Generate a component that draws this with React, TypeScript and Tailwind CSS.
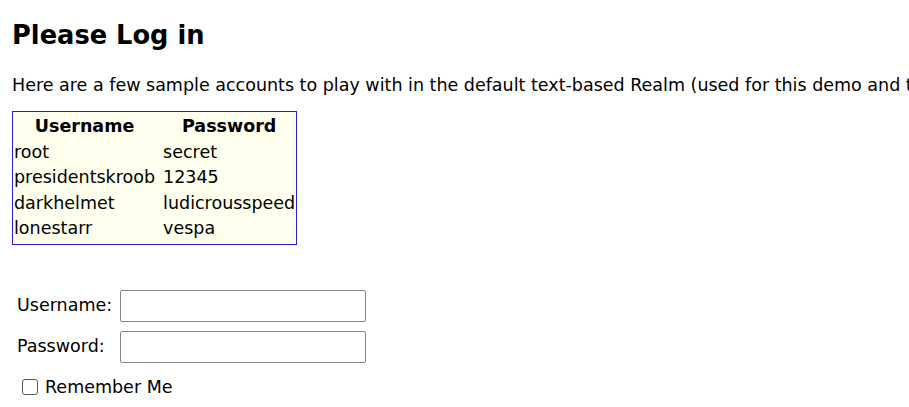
import React from "react";

const rows = [
  ["root", "secret"],
  ["presidentskroob", "12345"],
  ["darkhelmet", "ludicrousspeed"],
  ["lonestarr", "vespa"],
];

export default function App() {
  return (
    <div
      className="w-[909px] h-[407px] overflow-hidden bg-white text-black px-[12px] pt-[18px]"
      style={{ fontFamily: "'DejaVu Sans', Verdana, sans-serif" }}
    >
      <h1 className="text-[25.7px] font-bold leading-[34px] m-0">Please Log in</h1>
      <p className="text-[17.5px] leading-[22px] mt-[22px] whitespace-nowrap">
        Here are a few sample accounts to play with in the default text-based Realm (used for this demo and test app)
      </p>
      <div className="mt-[15px] inline-block border border-[#2222dd] bg-[#ffffee] px-[1px] py-[2px]">
        <div className="grid grid-cols-[auto_auto] gap-x-[8px] text-[17.5px] leading-[25.5px]">
          <div className="font-bold text-center">Username</div>
          <div className="font-bold text-center">Password</div>
          {rows.map(([u, p]) => (
            <React.Fragment key={u}>
              <div>{u}</div>
              <div>{p}</div>
            </React.Fragment>
          ))}
        </div>
      </div>
      <div className="mt-[45px] flex flex-col gap-[9px] text-[17.5px]">
        <div className="flex items-center">
          <label className="w-[108px] pl-[5px]">Username:</label>
          <input className="w-[246px] h-[32px] border border-[#858585] rounded-[2px] px-[3px]" />
        </div>
        <div className="flex items-center">
          <label className="w-[108px] pl-[5px]">Password:</label>
          <input type="password" className="w-[246px] h-[32px] border border-[#858585] rounded-[2px] px-[3px]" />
        </div>
      </div>
      <label className="mt-[12px] flex items-center text-[17.5px] leading-[24px] pl-[10px]">
        <span className="w-[16px] h-[16px] border border-[#555] rounded-[3px] bg-white mr-[7px] inline-block" />
        Remember Me
      </label>
    </div>
  );
}
